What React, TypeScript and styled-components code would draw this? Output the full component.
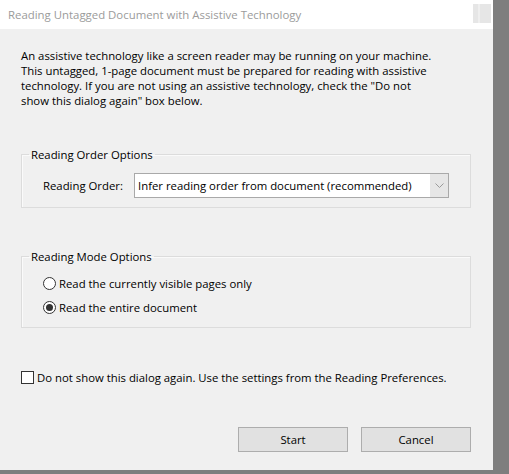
import React, { useState } from "react";
import styled, { createGlobalStyle } from "styled-components";

const GlobalStyle = createGlobalStyle`
  html, body {
    margin: 0;
    padding: 0;
    background: #7e7e7e;
  }
  body {
    font-family: "Open Sans", "Noto Sans", sans-serif;
    font-size: 11.35px;
    color: #000;
  }
`;

const Frame = styled.div`
  width: 493px;
  height: 470px;
  background: #f0f0f0;
  display: flex;
  flex-direction: column;
`;

const TitleBar = styled.div`
  height: 29px;
  flex: 0 0 29px;
  background: #fff;
  display: flex;
  align-items: center;
  justify-content: space-between;
  padding-left: 8px;
`;

const Title = styled.span`
  color: #9b9b9b;
  font-size: 11.4px;
`;

const CloseBox = styled.div`
  width: 18px;
  height: 19px;
  margin-right: 2px;
  margin-top: -3px;
  background: linear-gradient(90deg, #e6e6e6 0 30%, #efefef 30% 40%, #e6e6e6 40%);
`;

const Content = styled.div`
  padding: 0 22px 0 21px;
  display: flex;
  flex-direction: column;
  line-height: 15px;
`;

const Intro = styled.p`
  margin: 19px 0 0;
`;

const Group = styled.fieldset<{ $top: number }>`
  margin: ${(p) => p.$top}px 0 0;
  padding: 0;
  min-width: 0;
  border: 1px solid #dcdcdc;
  box-shadow: inset 1px 1px 0 #fafafa;
`;

const Legend = styled.legend`
  margin-left: 7px;
  padding: 0 2px;
  line-height: 15px;
`;

const GroupBody = styled.div<{ $padTop: number; $padBottom: number }>`
  padding: ${(p) => p.$padTop}px 1px ${(p) => p.$padBottom}px 21px;
`;

const SelectRow = styled.div`
  display: flex;
  align-items: center;
`;

const Label = styled.span`
  width: 91px;
`;

const Select = styled.div`
  width: 315px;
  height: 25px;
  box-sizing: border-box;
  border: 1px solid #a9a9a9;
  background: #fff;
  display: flex;
  align-items: center;
`;

const SelectText = styled.span`
  flex: 1;
  padding-left: 3px;
`;

const Arrow = styled.div`
  width: 18px;
  align-self: stretch;
  background: #e6e6e6;
  display: flex;
  align-items: center;
  justify-content: center;
`;

const OptionRow = styled.label`
  height: 24px;
  display: flex;
  align-items: center;
  gap: 3px;
`;

const Radio = styled.span<{ $checked?: boolean }>`
  width: 13px;
  height: 13px;
  box-sizing: border-box;
  border: 1px solid #333;
  border-radius: 50%;
  background: #fff;
  display: flex;
  align-items: center;
  justify-content: center;
  &::after {
    content: "";
    width: 7px;
    height: 7px;
    border-radius: 50%;
    background: ${(p) => (p.$checked ? "#333" : "transparent")};
  }
`;

const CheckRow = styled.label`
  margin-top: 39px;
  height: 20px;
  display: flex;
  align-items: center;
  gap: 3px;
`;

const Checkbox = styled.span`
  width: 13px;
  height: 13px;
  box-sizing: border-box;
  border: 1px solid #333;
  background: #fff;
`;

const Buttons = styled.div`
  margin-top: 40px;
  display: flex;
  justify-content: flex-end;
  gap: 13px;
`;

const Button = styled.button`
  width: 110px;
  height: 25px;
  box-sizing: border-box;
  border: 1px solid #adadad;
  background: #e1e1e1;
  font: inherit;
  color: #000;
  padding: 0;
`;

const App = () => {
  const [mode] = useState<"visible" | "entire">("entire");
  return (
    <>
      <GlobalStyle />
      <Frame>
        <TitleBar>
          <Title>Reading Untagged Document with Assistive Technology</Title>
          <CloseBox />
        </TitleBar>
        <Content>
          <Intro>
            An assistive technology like a screen reader may be running on your machine.
            <br />
            This untagged, 1-page document must be prepared for reading with assistive
            <br />
            technology. If you are not using an assistive technology, check the "Do not
            <br />
            show this dialog again" box below.
          </Intro>
          <Group $top={39}>
            <Legend>Reading Order Options</Legend>
            <GroupBody $padTop={11} $padBottom={9}>
              <SelectRow>
                <Label>Reading Order:</Label>
                <Select>
                  <SelectText>Infer reading order from document (recommended)</SelectText>
                  <Arrow>
                    <svg width="9" height="5" viewBox="0 0 9 5">
                      <path d="M0.5 0.5 L4.5 4.5 L8.5 0.5" fill="none" stroke="#9a9a9a" strokeWidth="1" />
                    </svg>
                  </Arrow>
                </Select>
              </SelectRow>
            </GroupBody>
          </Group>
          <Group $top={41}>
            <Legend>Reading Mode Options</Legend>
            <GroupBody $padTop={7} $padBottom={8}>
              <OptionRow>
                <Radio $checked={mode === "visible"} />
                Read the currently visible pages only
              </OptionRow>
              <OptionRow>
                <Radio $checked={mode === "entire"} />
                Read the entire document
              </OptionRow>
            </GroupBody>
          </Group>
          <CheckRow>
            <Checkbox />
            Do not show this dialog again. Use the settings from the Reading Preferences.
          </CheckRow>
          <Buttons>
            <Button>Start</Button>
            <Button>Cancel</Button>
          </Buttons>
        </Content>
      </Frame>
    </>
  );
};

export default App;
